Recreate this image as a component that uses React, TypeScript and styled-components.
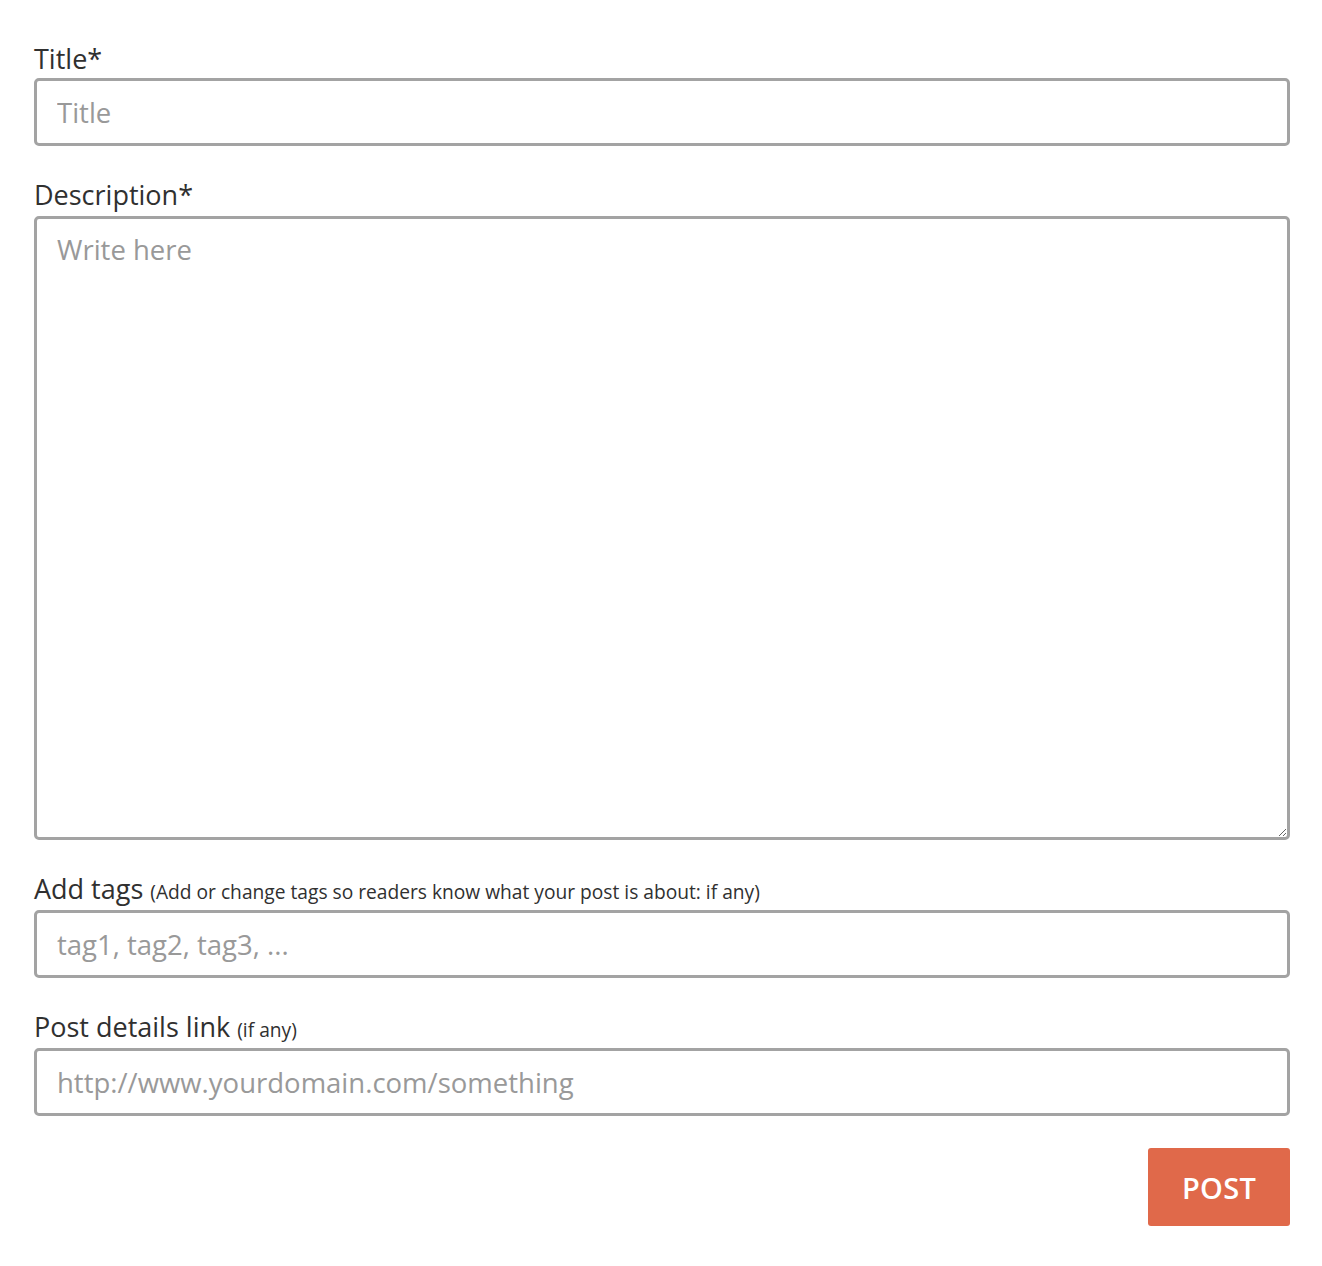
import * as React from 'react'
import styled, { createGlobalStyle } from 'styled-components'

const GlobalStyle = createGlobalStyle`
  html, body {
    margin: 0;
    padding: 0;
    background: #fff;
  }
  body {
    font-family: 'Open Sans', 'Liberation Sans', sans-serif;
    color: #333;
  }
  * {
    box-sizing: border-box;
  }
`

const Form = styled.form`
  display: flex;
  flex-direction: column;
  gap: 32px;
  padding: 42px 32px 40px 34px;
`

const Field = styled.div`
  display: flex;
  flex-direction: column;
  gap: 2px;
`

const Label = styled.label`
  font-size: 27px;
  line-height: 34px;
  color: #303030;
`

const Hint = styled.span`
  font-size: 19.2px;
  line-height: 32px;
`

const fieldBase = `
  width: 100%;
  border: 3px solid #a3a3a3;
  border-radius: 5px;
  font-family: 'Open Sans', 'Liberation Sans', sans-serif;
  font-size: 27.5px;
  color: #333;
  outline: none;
  background: #fff;
  &::placeholder {
    color: #999;
  }
`

const TextInput = styled.input`
  ${fieldBase}
  height: 68px;
  padding: 0 20px;
`

const TextArea = styled.textarea`
  ${fieldBase}
  height: 624px;
  margin-top: 2px;
  padding: 12px 20px;
  resize: vertical;
`

const Actions = styled.div`
  display: flex;
  justify-content: flex-end;
`

const PostButton = styled.button`
  width: 142px;
  height: 78px;
  border: none;
  border-radius: 3px;
  background: #e0694a;
  color: #fff;
  font-family: 'Open Sans', 'Liberation Sans', sans-serif;
  font-size: 29px;
  font-weight: 600;
  letter-spacing: 0.3px;
  cursor: pointer;
`

export default function App() {
  return (
    <>
      <GlobalStyle />
      <Form onSubmit={e => e.preventDefault()}>
        <Field>
          <Label>Title*</Label>
          <TextInput placeholder='Title' />
        </Field>
        <Field>
          <Label>Description*</Label>
          <TextArea placeholder='Write here' />
        </Field>
        <Field>
          <Label>
            Add tags <Hint>(Add or change tags so readers know what your post is about: if any)</Hint>
          </Label>
          <TextInput placeholder='tag1, tag2, tag3, ...' />
        </Field>
        <Field>
          <Label>
            Post details link <Hint>(if any)</Hint>
          </Label>
          <TextInput placeholder='http://www.yourdomain.com/something' />
        </Field>
        <Actions>
          <PostButton type='submit'>POST</PostButton>
        </Actions>
      </Form>
    </>
  )
}
